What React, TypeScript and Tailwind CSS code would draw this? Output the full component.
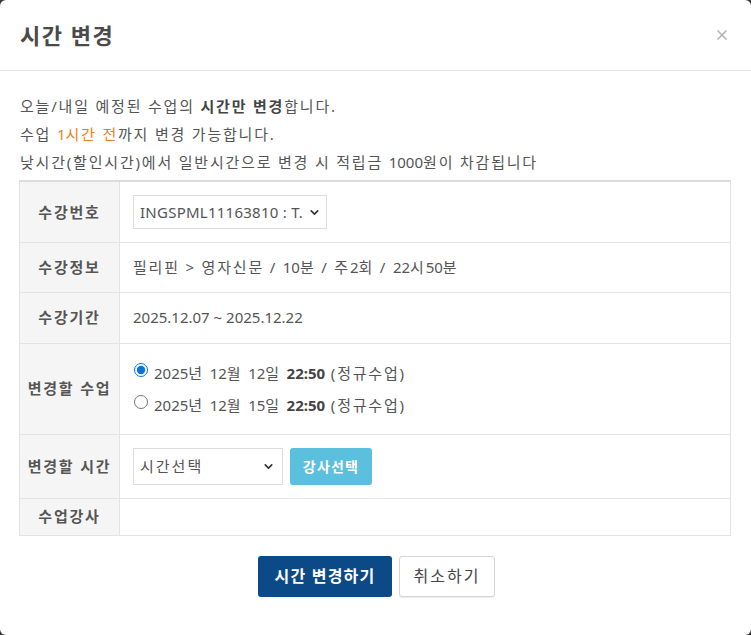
import { ChevronDown, X } from "lucide-react"

const font = { fontFamily: '"Noto Sans", "Noto Sans CJK KR", sans-serif' }

// latin runs keep normal spacing, korean text gets the wider spacing of the original
function N({ children }: { children: React.ReactNode }) {
    return <span className="tracking-normal">{children}</span>
}

function Label({ children }: { children: React.ReactNode }) {
    return (
        <th className="w-[100px] bg-[#f5f5f5] border-r border-[#e3e3e3] text-center text-[15px] font-bold text-[#555] align-middle">
            {children}
        </th>
    )
}

export default function App() {
    return (
        <div className="min-h-[635px] bg-[#3a3a3a] tracking-[1.8px]" style={font}>
            <div className="h-[635px] w-full rounded-[6px] bg-white text-[#555] overflow-hidden">
                {/* header */}
                <div className="flex items-center justify-between h-[71px] px-5 border-b border-[#e5e5e5]">
                    <h1 className="text-[22px] font-bold text-[#4a4a4a] tracking-[1.5px]">시간 변경</h1>
                    <X className="w-4 h-4 text-[#b5b5b5] mr-[1px]" strokeWidth={2.5} />
                </div>

                <div className="px-[19px] pt-[21px]">
                    <div className="text-[15px] leading-[28px] pl-[1px]">
                        <p>오늘/내일 예정된 수업의 <b className="text-[#444]">시간만 변경</b>합니다.</p>
                        <p>수업 <span className="text-[#f07d1a]"><N>1</N>시간 전</span>까지 변경 가능합니다.</p>
                        <p>낮시간(할인시간)에서 일반시간으로 변경 시 적립금 <N>1000</N>원이 차감됩니다</p>
                    </div>

                    <table className="w-[712px] mt-[4px] border-collapse border-t-2 border-t-[#dcdcdc] border-b border-b-[#e3e3e3] border-x border-x-[#e3e3e3] text-[15px]">
                        <tbody>
                            <tr className="h-[61px] border-b border-[#e3e3e3]">
                                <Label>수강번호</Label>
                                <td className="px-[13px]">
                                    <div className="relative w-[194px]">
                                        <select className="appearance-none w-full h-[34px] border border-[#dcdcdc] bg-white pl-[6px] pr-[16px] text-[15px] tracking-[0.25px] text-[#555] outline-none">
                                            <option>INGSPML11163810 : T.</option>
                                        </select>
                                        <ChevronDown className="absolute right-[6px] top-[11px] w-[13px] h-[13px] text-[#333] pointer-events-none" strokeWidth={3} />
                                    </div>
                                </td>
                            </tr>
                            <tr className="h-[50px] border-b border-[#e3e3e3]">
                                <Label>수강정보</Label>
                                <td className="px-[13px]">필리핀 &gt; 영자신문 / <N>10</N>분 / 주<N>2</N>회 / <N>22</N>시<N>50</N>분</td>
                            </tr>
                            <tr className="h-[51px] border-b border-[#e3e3e3]">
                                <Label>수강기간</Label>
                                <td className="px-[13px] tracking-normal">2025.12.07 ~ 2025.12.22</td>
                            </tr>
                            <tr className="h-[91px] border-b border-[#e3e3e3]">
                                <Label>변경할 수업</Label>
                                <td className="px-[13px] leading-[32px]">
                                    <label className="flex items-center gap-[6px]">
                                        <input type="radio" name="cls" defaultChecked className="w-[14px] h-[14px] m-0 ml-[1px] -mt-[6px] accent-[#0a74da]" />
                                        <span><N>2025</N>년 <N>12</N>월 <N>12</N>일 <b className="text-[#444] tracking-normal">22:50</b> (정규수업)</span>
                                    </label>
                                    <label className="flex items-center gap-[6px]">
                                        <input type="radio" name="cls" className="w-[14px] h-[14px] m-0 ml-[1px] -mt-[6px]" />
                                        <span><N>2025</N>년 <N>12</N>월 <N>15</N>일 <b className="text-[#444] tracking-normal">22:50</b> (정규수업)</span>
                                    </label>
                                </td>
                            </tr>
                            <tr className="h-[64px] border-b border-[#e3e3e3]">
                                <Label>변경할 시간</Label>
                                <td className="px-[13px]">
                                    <div className="flex items-center gap-[7px]">
                                        <div className="relative w-[150px]">
                                            <select className="appearance-none w-full h-[37px] border border-[#dcdcdc] bg-white pl-[6px] pr-6 text-[15px] tracking-[2px] text-[#555] outline-none">
                                                <option>시간선택</option>
                                            </select>
                                            <ChevronDown className="absolute right-[8px] top-[12px] w-[13px] h-[13px] text-[#333] pointer-events-none" strokeWidth={3} />
                                        </div>
                                        <button className="h-[37px] w-[82px] rounded-[3px] bg-[#5bbfde] text-white text-[14px] font-bold tracking-[1.2px]">강사선택</button>
                                    </div>
                                </td>
                            </tr>
                            <tr className="h-[37px]">
                                <Label>수업강사</Label>
                                <td className="px-[13px]"></td>
                            </tr>
                        </tbody>
                    </table>
                </div>

                <div className="flex justify-center gap-[7px] mt-[20px] pl-[2px]">
                    <button className="h-[41px] w-[134px] rounded-[3px] bg-[#0c4a87] text-white text-[16px] font-bold tracking-[1.2px]">시간 변경하기</button>
                    <button className="h-[41px] w-[96px] rounded-[3px] bg-white border border-[#d6d6d6] text-[#444] text-[16px] tracking-[2px] shadow-[0_1px_1px_rgba(0,0,0,0.08)]">취소하기</button>
                </div>
            </div>
        </div>
    )
}
